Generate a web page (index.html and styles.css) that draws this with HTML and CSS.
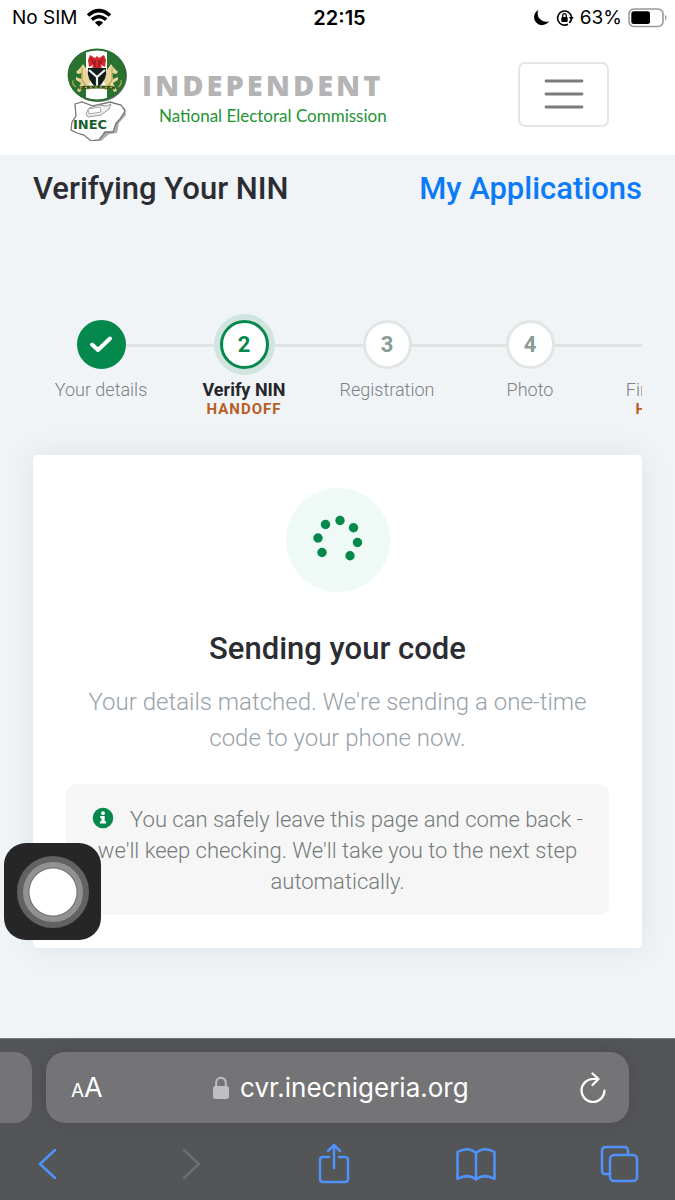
FILE: index.html
```html
<!DOCTYPE html>
<html lang="en">
<head>
<meta charset="utf-8">
<meta name="viewport" content="width=device-width, initial-scale=1">
<title>Verifying Your NIN</title>
<link rel="stylesheet" href="styles.css">
</head>
<body>
<div class="status-bar">
  <div class="status-left">
    <span>No SIM</span>
    <svg width="26" height="20" viewBox="0 0 26 20" fill="none" stroke="#000" stroke-width="3.6"><path d="M2 7.500Q13-2.300 24 7.500"/><path d="M5.800 11.600Q13 5.400 20.200 11.600"/><path d="M13 18.500L8.800 14.400Q13 11.200 17.200 14.400Z" fill="#000" stroke="none"/></svg>
  </div>
  <strong class="clock">22:15</strong>
  <div class="status-right">
    <svg width="17" height="18" viewBox="0 0 17 18"><path d="M5.500 1A8 8 0 1 0 16 12.200A8.300 8.300 0 0 1 5.500 1Z"/></svg>
    <svg width="18" height="18" viewBox="0 0 18 18" fill="none" stroke="#000" stroke-width="1.600"><path d="M12 15.200A7 7 0 1 1 15.500 8"/><path d="M13.300 13.800A7 7 0 0 0 15.500 10"/><path d="M12.800 8h5l-2.500 3.200Z" fill="#000" stroke="none"/><rect x="5.300" y="8" width="6.400" height="5" rx="1" fill="#000" stroke="none"/><path d="M6.700 8V6.500a1.800 1.800 0 0 1 3.600 0V8" stroke-width="1.300"/></svg>
    <span>63%</span>
    <svg width="39" height="20" viewBox="0 0 39 20"><rect x="1" y="1" width="34" height="17.500" rx="5" fill="none" stroke="#999" stroke-width="1.600"/><rect x="3.300" y="3.300" width="18.700" height="12.800" rx="2.500"/><path d="M37 6.500q3 3.200 0 6.500Z" fill="#999"/></svg>
  </div>
</div>
<header class="site-header">
  <a class="brand" href="#" aria-label="INEC home">
    <svg class="emblem" width="62" height="94" viewBox="0 0 62 94">
      <defs><clipPath id="oval"><ellipse cx="31" cy="28" rx="28" ry="25"/></clipPath></defs>
      <ellipse cx="32" cy="29" rx="29" ry="26" fill="#777"/>
      <g clip-path="url(#oval)"><path fill="#28732f" d="M0 0h62v56H0z"/><path fill="#fff" d="M20 0h21v56H20z"/></g>
      <ellipse cx="31" cy="28" rx="28.500" ry="25.500" fill="none" stroke="#286d30" stroke-width="1.800"/>
      <path fill="#d5272d" d="M31 9l2 2 5-3 2 5-1 7-4-2 1 4-5-1-5 1 1-4-4 2-1-7 2-5 5 3Z"/>
      <path stroke="#7b1518" d="M25 11l3 6m9-6-3 6m-5-4v7m4-7v7"/>
      <path fill="#e8d59b" d="M21 23l-4-6-2 3-5 5 2 2 4-1-1 6-5-2 0 3 5 3-4 8 3 1 4-7 3 3 0 5 3-1-1-8 2-4-3-5ZM41 23l4-6 2 3 5 5-2 2-4-1 1 6 5-2 0 3-5 3 4 8-3 1-4-7-3 3 0 5-3-1 1-8-2-4 3-5Z"/>
      <path fill="none" stroke="#b9a250" stroke-width="1.200" d="M16 21v12l4 6m26-18v12l-4 6M10 40q-4-2-3-7m45 7q4-2 3-7"/>
      <path fill="#111c1b" d="M22 21h18q2 12-9 20Q20 33 22 21Z"/>
      <path fill="none" stroke="#eee" stroke-width="2.200" d="M23 23l8 7 8-7m-8 7v10"/>
      <path fill="none" stroke="#39551d" stroke-width="3" d="M13 41q18-2 36 0"/>
      <path fill="none" stroke="#d2bd57" stroke-dasharray="2 3" d="M14 41q17-2 34 0"/>
      <path fill="#fff" d="M21 43h20v7H21z"/>
      <path fill="#aaa" d="M10 58l8-2 11 4 17-4 13 5 1 7-7 8-2 10-8 1-8 7-8-2-8-6-9-2-3-9 4-5Z"/>
      <path fill="#fff" stroke="#777" stroke-width="1.300" d="M9 57l7-2 11 4 17-4 11 3 4 6-5 8-4 4-3 9-8 0-6 8-8 1-7-6-7-2-6-3 1-8 4-6Z"/>
      <path fill="#eee" stroke="#999" d="M20 67l3-6 10-3 8 1 4-2-2 5-8 6-13 2Z"/><path fill="#fff" stroke="#aaa" d="M22 62l12-2 1 5-12 2Z"/>
      <text class="emblem-text" x="7" y="82">INEC</text>
    </svg>
    <span class="brand-text"><b>INDEPENDENT</b><span>National Electoral Commission</span></span>
  </a>
  <button class="menu" aria-label="Open menu"><svg width="40" height="32" viewBox="0 0 40 32" stroke="#7b7b7b" stroke-width="2.800" stroke-linecap="round"><path d="M2 3h36M2 16h36M2 29h36"/></svg></button>
</header>
<main class="page">
  <div class="title-row"><h1>Verifying Your NIN</h1><a href="#">My Applications</a></div>
  <ol class="stepper">
    <li class="step done"><span class="dot"><svg width="24" height="20" viewBox="0 0 24 20" fill="none" stroke="#fff" stroke-width="4" stroke-linecap="round" stroke-linejoin="round"><path d="M3 9.500L9 15 21 3.500"/></svg></span><span class="label">Your details</span></li>
    <li class="step current" aria-current="step"><span class="dot">2</span><span class="label">Verify NIN</span><span class="tag">HANDOFF</span></li>
    <li class="step"><span class="dot">3</span><span class="label">Registration</span></li>
    <li class="step"><span class="dot">4</span><span class="label">Photo</span></li>
    <li class="step"><span class="dot">5</span><span class="label">Fingerprints</span><span class="tag">HANDOFF</span></li>
  </ol>
  <section class="card">
    <div class="spinner"><svg width="104" height="104" viewBox="0 0 104 104" fill="#05884c"><circle cx="54" cy="32.500" r="4.700"/><circle cx="39.500" cy="36.500" r="4.700"/><circle cx="67.500" cy="39.800" r="4.700"/><circle cx="32" cy="50" r="4.700"/><circle cx="71.500" cy="54.500" r="4.700"/><circle cx="36" cy="64.500" r="4.700"/><circle cx="64" cy="67.800" r="4.700"/></svg></div>
    <h2>Sending your code</h2>
    <p class="lead">Your details matched. We're sending a one-time code to your phone now.</p>
    <p class="note"><svg width="22" height="22" viewBox="0 0 22 22"><circle cx="11" cy="11" r="10.300" fill="#05884c"/><circle cx="11" cy="6.200" r="1.900" fill="#fff"/><path fill="#fff" d="M8.300 9h4.400v5.300h1.400v2.200H8v-2.200h1.500v-3.100H8.300Z"/></svg>You can safely leave this page and come back - we'll keep checking. We'll take you to the next step automatically.</p>
  </section>
</main>
<footer class="browser">
  <div class="tabs">
    <div class="prev-tab"></div>
    <div class="address">
      <button class="text-size" aria-label="Text size"><small>A</small>A</button>
      <span class="url"><svg width="16" height="24" viewBox="0 0 16 24"><rect y="10" width="16" height="13" rx="2.500" fill="#bebec4"/><path d="M3.200 11V6.500a4.800 4.800 0 0 1 9.600 0V11" fill="none" stroke="#bebec4" stroke-width="2"/></svg>cvr.inecnigeria.org</span>
      <button aria-label="Reload"><svg width="28" height="32" viewBox="0 0 28 32" fill="none" stroke="#fff" stroke-width="2.200" stroke-linecap="round" stroke-linejoin="round"><path d="M25.500 18.500A11.500 11.500 0 1 1 14 7h5M13.500 1.500L19.500 7l-6 6"/></svg></button>
    </div>
  </div>
  <nav class="toolbar">
    <button aria-label="Back"><svg width="40" height="40" viewBox="0 0 40 40"><path d="M27 6L12 20l15 14"/></svg></button>
    <button class="off" aria-label="Forward" disabled><svg width="40" height="40" viewBox="0 0 40 40"><path d="M13 6l15 14-15 14"/></svg></button>
    <button aria-label="Share"><svg width="40" height="40" viewBox="0 0 40 40"><path d="M15 13H9q-3 0-3 3v19q0 3 3 3h22q3 0 3-3V16q0-3-3-3h-6M20 24V1M14 7l6-6 6 6"/></svg></button>
    <button aria-label="Bookmarks"><svg width="40" height="40" viewBox="0 0 40 40"><path d="M20 9Q12 2 1.500 8v27Q12 29 20 35.500 28 29 38.500 35V8Q28 2 20 9v26"/></svg></button>
    <button aria-label="Tabs"><svg width="40" height="40" viewBox="0 0 40 40"><path d="M11 30H6q-3 0-3-3V7q0-4 4-4h18q4 0 4 4v4"/><rect x="11" y="11" width="27" height="26" rx="4"/></svg></button>
  </nav>
</footer>
<button class="assist" aria-label="AssistiveTouch"><span></span></button>
</body>
</html>
```
FILE: styles.css
```css
* { box-sizing: border-box; }
body { margin: 0; min-height: 100vh; display: flex; flex-direction: column; background: #f0f4f7; font-family: Roboto, "Noto Sans", sans-serif; color: #2b2d33; }
button { border: 0; padding: 0; background: none; color: inherit; font: inherit; display: flex; }
a { text-decoration: none; }
svg { display: block; flex: none; }
h1, h2, p, ol { margin: 0; padding: 0; }

.status-bar { display: grid; grid-template-columns: 1fr auto 1fr; align-items: center; height: 35px; padding: 0 8px 0 12px; background: #fff; color: #000; font: 19px Inter, sans-serif; }
.status-left, .status-right { display: flex; align-items: center; gap: 8px; }
.status-right { justify-content: flex-end; gap: 6px; }
.clock { font-size: 20px; font-weight: 600; }

.site-header { display: flex; align-items: center; justify-content: space-between; height: 120px; padding: 0 66px 2px; background: #fff; }
.brand { display: flex; align-items: center; gap: 14px; }
.emblem-text { font: bold 13px "DejaVu Sans", sans-serif; fill: #17602a; }
.brand-text { display: flex; flex-direction: column; padding-top: 10px; color: #239334; font: 17px/28px Lato, sans-serif; }
.brand-text b { color: #b4b4b4; font: 800 29px/34px "Open Sans", sans-serif; letter-spacing: 3px; }
.brand-text span { padding-left: 17px; }
.menu { align-items: center; justify-content: center; width: 91px; height: 65px; border: 2px solid #e5e5e5; border-radius: 7px; }

.page { flex: 1; padding: 0 33px 88px; }
.title-row { display: flex; justify-content: space-between; align-items: center; height: 66px; font-size: 31px; font-weight: 500; }
h1 { font: inherit; }
.title-row a { color: #0d7bf7; }

.stepper { display: flex; gap: 7px; margin-top: 92px; padding-top: 7px; height: 142px; overflow: hidden; list-style: none; }
.step { position: relative; flex: 0 0 136px; display: flex; flex-direction: column; align-items: center; color: #7c8184; }
.step::after { content: ""; position: absolute; top: 24px; left: 92px; width: 96px; height: 3px; background: #dfe4e3; }
.dot { position: relative; z-index: 1; display: flex; align-items: center; justify-content: center; width: 49px; height: 49px; border: 3px solid #e1e5e4; border-radius: 50%; background: #fff; color: #8b9b95; font-size: 22px; font-weight: 700; }
.done .dot { border-color: #05884c; background: #05884c; }
.current .dot { border-color: #05884c; color: #05884c; box-shadow: 0 0 0 6px #d0e5df; }
.label { margin-top: 9px; font-size: 18px; line-height: 24px; font-weight: 300; }
.current .label { color: #25272c; font-weight: 700; }
.tag { color: #b85d24; font-size: 15px; line-height: 14px; font-weight: 700; letter-spacing: 1px; }

.card { padding: 33px 33px; border-radius: 5px; background: #fff; box-shadow: 0 0 32px #dce2e6; text-align: center; }
.spinner { width: 104px; margin: 0 auto; border-radius: 50%; background: #eff9f6; }
h2 { margin-top: 38px; font-size: 31px; line-height: 38px; font-weight: 500; }
.lead { margin-top: 16px; color: #98a2a9; font-size: 24px; line-height: 36px; font-weight: 300; }
.note { margin-top: 28px; padding: 20px 24px 18px; border-radius: 10px; background: #f6f6f6; color: #747b7a; font-size: 22px; line-height: 31px; font-weight: 300; }
.note svg { display: inline-block; vertical-align: -2px; margin-right: 16px; }

.browser { padding-top: 13px; border-top: 1px solid #747679; background: #545557; color: #fff; font-family: Inter, sans-serif; }
.tabs { display: flex; gap: 14px; padding-right: 46px; }
.prev-tab { width: 32px; border-radius: 0 18px 18px 0; background: #747476; }
.address { flex: 1; display: flex; align-items: center; justify-content: space-between; height: 71px; padding: 0 22px 0 25px; border-radius: 19px; background: #747476; box-shadow: 0 0 16px #4b4c4e; }
.text-size { align-items: baseline; font-size: 27px; }
.text-size small { font-size: 19px; }
.url { display: flex; align-items: center; gap: 11px; font-size: 26px; }
.toolbar { display: flex; justify-content: space-between; padding: 21px 36px 16px 28px; }
.toolbar svg { fill: none; stroke: #4f92fa; stroke-width: 2.500; stroke-linecap: round; stroke-linejoin: round; }
.toolbar .off svg { stroke: #6c6d70; }

.assist { position: fixed; left: 4px; bottom: 260px; z-index: 5; align-items: center; justify-content: center; width: 97px; height: 97px; border-radius: 22px; background: #262626; }
.assist span { width: 72px; height: 72px; border: 6px solid #626262; border-radius: 50%; background: radial-gradient(circle, #fff 0 23px, #6d6d6d 24px, #919191 25px); }
```
